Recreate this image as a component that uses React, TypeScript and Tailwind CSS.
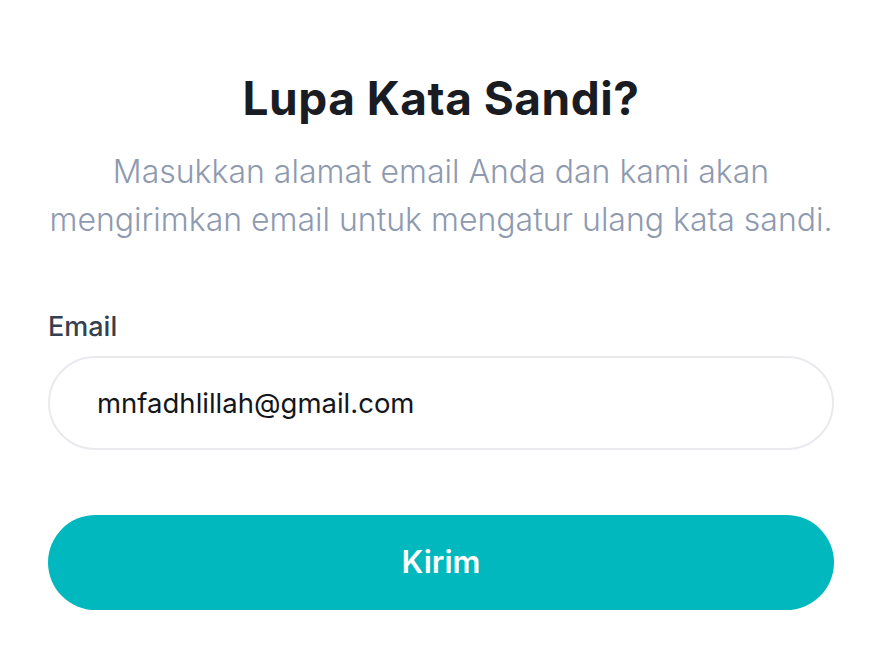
export default function App() {
  return (
    <div className="min-h-screen bg-white pl-12 pr-[37px] pt-[72px] font-['Inter',sans-serif]">
      <h1 className="text-center text-[46px] leading-[52px] font-bold text-[#191c22] tracking-[0.5px]">
        Lupa Kata Sandi?
      </h1>
      <p className="mt-[24px] text-center text-[32px] leading-[48px] font-light text-[#8e9ab0] whitespace-nowrap">
        Masukkan alamat email Anda dan kami akan
        <br />
        mengirimkan email untuk mengatur ulang kata sandi.
      </p>

      <div className="mt-[67px]">
        <label className="block text-[27px] leading-[32px] font-medium text-[#353f50]">
          Email
        </label>
        <input
          type="email"
          defaultValue="mnfadhlillah@gmail.com"
          className="mt-[13px] block h-[94px] w-full rounded-full border-2 border-[#e8eaee] px-[47px] text-[27.5px] text-[#14161b] outline-none"
        />
      </div>

      <button className="mt-[65px] flex h-[95px] w-full items-center justify-center rounded-full bg-[#00b8bd] text-[31px] font-semibold text-white">
        Kirim
      </button>
    </div>
  );
}
